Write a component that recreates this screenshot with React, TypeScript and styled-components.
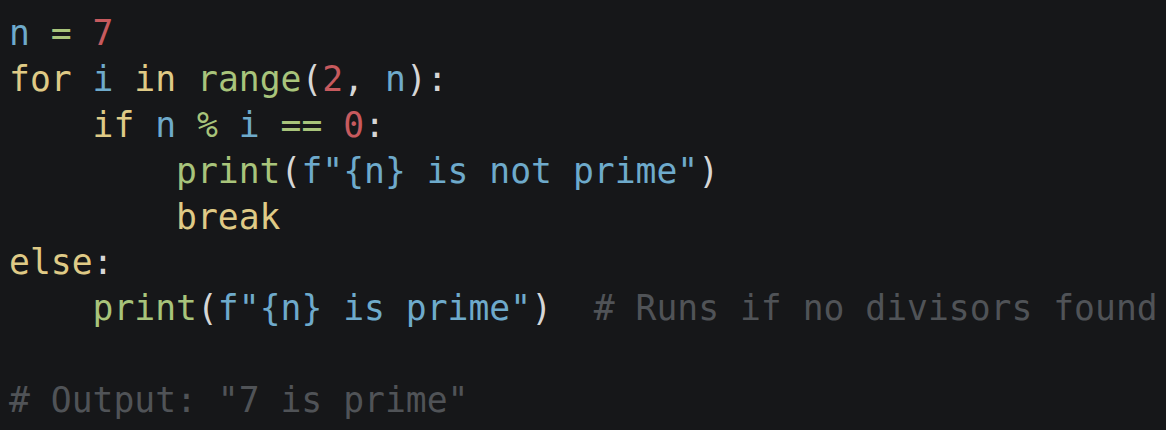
import React from "react";
import styled, { createGlobalStyle } from "styled-components";

const Global = createGlobalStyle`
  html, body {
    margin: 0;
    padding: 0;
    background: #161719;
  }
`;

type Kind = "id" | "kw" | "fn" | "num" | "op" | "punc" | "str" | "cm";

const colors: Record<Kind, string> = {
  id: "#6eaacb",
  kw: "#dfca86",
  fn: "#a8c47b",
  num: "#c75a5e",
  op: "#a8c47b",
  punc: "#d6d6d6",
  str: "#6eaacb",
  cm: "#505357",
};

const Editor = styled.pre`
  margin: 0;
  width: 1166px;
  height: 430px;
  box-sizing: border-box;
  padding: 11px 0 0 9px;
  background: #161719;
  font-family: "DejaVu Sans Mono", "Liberation Mono", monospace;
  font-size: 34.7px;
  line-height: 45.9px;
  overflow: hidden;
  white-space: pre;
`;

const Line = styled.div`
  height: 45.9px;
`;

const Tok = styled.span<{ $k: Kind }>`
  color: ${(p) => colors[p.$k]};
`;

type T = [Kind, string];

const code: T[][] = [
  [["id", "n"], ["punc", " "], ["op", "="], ["punc", " "], ["num", "7"]],
  [
    ["kw", "for"], ["punc", " "], ["id", "i"], ["punc", " "], ["kw", "in"], ["punc", " "],
    ["fn", "range"], ["punc", "("], ["num", "2"], ["punc", ", "], ["id", "n"], ["punc", "):"],
  ],
  [
    ["punc", "    "], ["kw", "if"], ["punc", " "], ["id", "n"], ["punc", " "], ["op", "%"],
    ["punc", " "], ["id", "i"], ["punc", " "], ["op", "=="], ["punc", " "], ["num", "0"], ["punc", ":"],
  ],
  [
    ["punc", "        "], ["fn", "print"], ["punc", "("], ["str", 'f"{n} is not prime"'], ["punc", ")"],
  ],
  [["punc", "        "], ["kw", "break"]],
  [["kw", "else"], ["punc", ":"]],
  [
    ["punc", "    "], ["fn", "print"], ["punc", "("], ["str", 'f"{n} is prime"'], ["punc", ")"],
    ["punc", "  "], ["cm", "# Runs if no divisors found"],
  ],
  [],
  [["cm", '# Output: "7 is prime"']],
];

export default function App() {
  return (
    <>
      <Global />
      <Editor>
        {code.map((line, i) => (
          <Line key={i}>
            {line.length === 0
              ? " "
              : line.map(([k, t], j) => (
                  <Tok key={j} $k={k}>
                    {t}
                  </Tok>
                ))}
          </Line>
        ))}
      </Editor>
    </>
  );
}
